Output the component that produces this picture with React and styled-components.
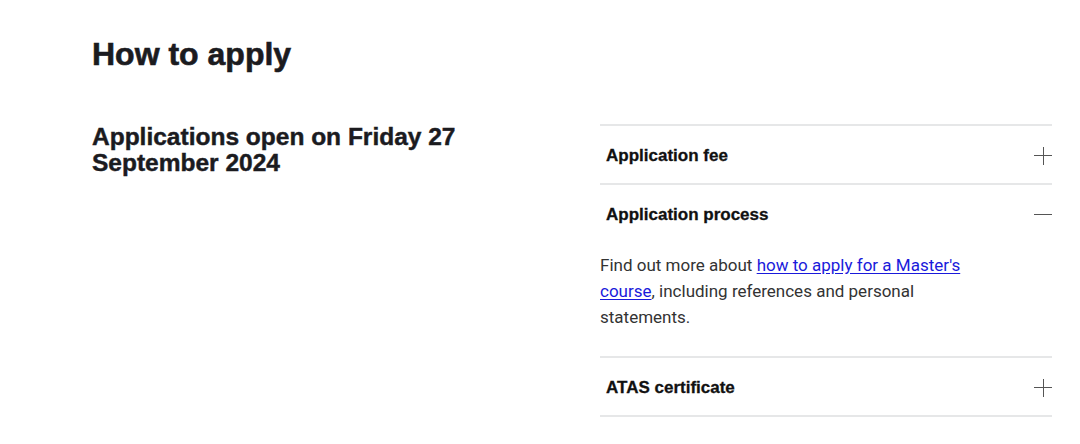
import React from "react";
import styled, { createGlobalStyle } from "styled-components";

const Global = createGlobalStyle`
  html, body { margin: 0; padding: 0; background: #fff; }
  body { font-family: Roboto, "Liberation Sans", Arial, sans-serif; color: #1b1b1f; }
  * { box-sizing: border-box; }
`;

const heading = `"Liberation Sans", Arial, sans-serif`;

const Page = styled.main`
  width: 960px;
  margin: 0 0 0 92px;
  padding-top: 34px;
`;

const Title = styled.h2`
  margin: 0;
  font-family: ${heading};
  font-size: 32px;
  line-height: 40px;
  font-weight: 700;
  color: #1b1b1f;
  -webkit-text-stroke: 0.6px #1b1b1f;
`;

const Grid = styled.div`
  display: grid;
  grid-template-columns: 1fr 452px;
  column-gap: 40px;
  margin-top: 50px;
`;

const Sub = styled.h3`
  margin: 0;
  font-family: ${heading};
  font-size: 24.5px;
  line-height: 26px;
  font-weight: 700;
  color: #1b1b1f;
  max-width: 400px;
  -webkit-text-stroke: 0.45px #1b1b1f;
`;

const Accordion = styled.div`
  border-top: 2px solid #e6e7e8;
`;

const Item = styled.div`
  border-bottom: 2px solid #e6e7e8;
`;

const Header = styled.button`
  all: unset;
  box-sizing: border-box;
  display: flex;
  align-items: center;
  justify-content: space-between;
  width: 100%;
  height: 57px;
  padding: 2px 0 0 6px;
  cursor: pointer;
  font-family: ${heading};
  font-size: 17px;
  font-weight: 700;
  color: #111;
  -webkit-text-stroke: 0.3px #111;
`;

const Panel = styled.div`
  padding: 10px 0 26px 0;
  max-width: 380px;
  font-family: Roboto, "Liberation Sans", Arial, sans-serif;
  font-size: 17px;
  line-height: 26px;
  color: #333;
`;

const Link = styled.a`
  color: #1a1adb;
  text-decoration: underline;
  text-underline-offset: 2px;
`;

const Icon = ({ open }) => (
  <svg width="18" height="18" viewBox="0 0 18 18" aria-hidden="true">
    <line x1="0" y1="8.5" x2="18" y2="8.5" stroke="#555" strokeWidth="1" />
    {!open && <line x1="9.5" y1="0" x2="9.5" y2="18" stroke="#555" strokeWidth="1" />}
  </svg>
);

export default function App() {
  return (
    <>
      <Global />
      <Page>
        <Title>How to apply</Title>
        <Grid>
          <Sub>Applications open on Friday 27 September 2024</Sub>
          <Accordion>
            <Item>
              <Header>Application fee<Icon /></Header>
            </Item>
            <Item>
              <Header>Application process<Icon open /></Header>
              <Panel>
                Find out more about{" "}
                <Link href="#">how to apply for a Master's course</Link>, including
                references and personal statements.
              </Panel>
            </Item>
            <Item>
              <Header>ATAS certificate<Icon /></Header>
            </Item>
          </Accordion>
        </Grid>
      </Page>
    </>
  );
}
